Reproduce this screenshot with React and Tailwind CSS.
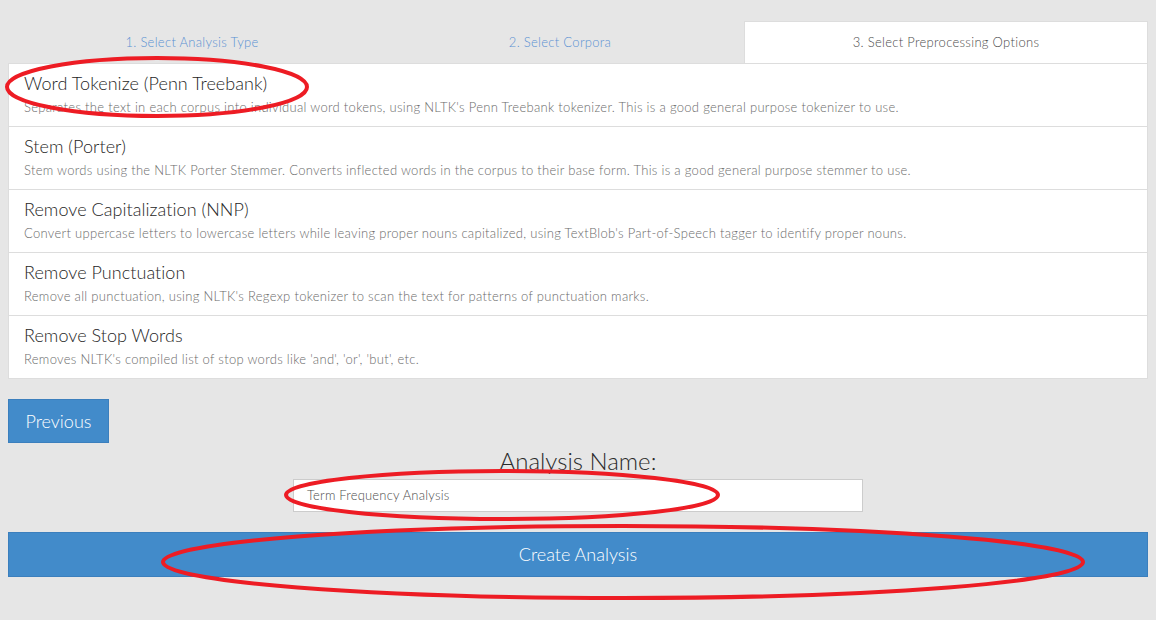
import React from "react";

const items = [
  ["Word Tokenize (Penn Treebank)", "Separates the text in each corpus into individual word tokens, using NLTK's Penn Treebank tokenizer. This is a good general purpose tokenizer to use."],
  ["Stem (Porter)", "Stem words using the NLTK Porter Stemmer. Converts inflected words in the corpus to their base form. This is a good general purpose stemmer to use."],
  ["Remove Capitalization (NNP)", "Convert uppercase letters to lowercase letters while leaving proper nouns capitalized, using TextBlob's Part-of-Speech tagger to identify proper nouns."],
  ["Remove Punctuation", "Remove all punctuation, using NLTK's Regexp tokenizer to scan the text for patterns of punctuation marks."],
  ["Remove Stop Words", "Removes NLTK's compiled list of stop words like 'and', 'or', 'but', etc."],
];

export default function App() {
  return (
    <div
      className="relative w-[1156px] h-[620px] bg-[#e6e6e6] overflow-hidden font-light"
      style={{ fontFamily: "Lato, 'Open Sans', sans-serif" }}
    >
      <div className="px-[8px] pt-[21px]">
        <div className="flex h-[42px]">
          <div className="w-[368px] flex items-center justify-center text-[13px] tracking-[0.3px] text-[#5b92d3] border border-transparent border-b-0">1. Select Analysis Type</div>
          <div className="w-[368px] flex items-center justify-center text-[13px] tracking-[0.3px] text-[#5b92d3] border border-transparent border-b-0">2. Select Corpora</div>
          <div className="flex-1 flex items-center justify-center text-[13px] tracking-[0.3px] text-[#4d4d4d] bg-white border border-b-0 border-[#ddd]">3. Select Preprocessing Options</div>
        </div>
        <div className="bg-white border border-[#ddd]">
          {items.map(([t, d], i) => (
            <div key={i} className={"px-[15px] pt-[6px] " + (i < items.length - 1 ? "h-[63px] border-b border-[#ddd]" : "h-[62px]")}>
              <div className="text-[18px] leading-[27px] tracking-[0.05px] text-[#262626]">{t}</div>
              <div className="text-[13px] leading-[20px] tracking-[0.3px] text-[#6b6b6b]">{d}</div>
            </div>
          ))}
        </div>
        <div className="mt-[20px]">
          <button className="h-[44px] w-[101px] bg-[#428bca] border border-[#3b7fbd] text-white text-[18px] font-light">Previous</button>
        </div>
        <div className="mt-[5px] text-center text-[24px] leading-[26px] text-[#2b2b2b]">Analysis Name:</div>
        <div className="flex justify-center mt-[5px]">
          <div className="w-[570px] h-[33px] bg-white border border-[#ccc] flex items-center px-[13px] text-[13px] tracking-[0.2px] text-[#4d4d4d]">Term Frequency Analysis</div>
        </div>
        <button className="mt-[20px] w-full h-[45px] bg-[#428bca] border border-[#3b7fbd] text-white text-[18px] font-light">Create Analysis</button>
      </div>
      <svg className="absolute inset-0 pointer-events-none" width="1156" height="620">
        <ellipse cx="157" cy="87" rx="150" ry="29" fill="none" stroke="#ed1c24" strokeWidth="4" />
        <ellipse cx="502" cy="495" rx="216" ry="24" fill="none" stroke="#ed1c24" strokeWidth="4" />
        <ellipse cx="623" cy="562" rx="460" ry="36" fill="none" stroke="#ed1c24" strokeWidth="4" />
      </svg>
    </div>
  );
}
